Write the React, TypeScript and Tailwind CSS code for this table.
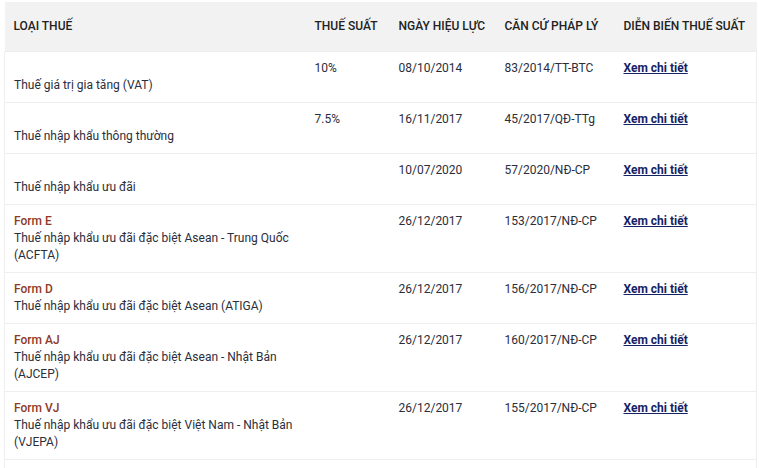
const rows = [
  { form: "", name: "Thuế giá trị gia tăng (VAT)", rate: "10%", date: "08/10/2014", basis: "83/2014/TT-BTC" },
  { form: "", name: "Thuế nhập khẩu thông thường", rate: "7.5%", date: "16/11/2017", basis: "45/2017/QĐ-TTg" },
  { form: "", name: "Thuế nhập khẩu ưu đãi", rate: "", date: "10/07/2020", basis: "57/2020/NĐ-CP" },
  { form: "Form E", name: "Thuế nhập khẩu ưu đãi đặc biệt Asean - Trung Quốc (ACFTA)", rate: "", date: "26/12/2017", basis: "153/2017/NĐ-CP" },
  { form: "Form D", name: "Thuế nhập khẩu ưu đãi đặc biệt Asean (ATIGA)", rate: "", date: "26/12/2017", basis: "156/2017/NĐ-CP" },
  { form: "Form AJ", name: "Thuế nhập khẩu ưu đãi đặc biệt Asean - Nhật Bản (AJCEP)", rate: "", date: "26/12/2017", basis: "160/2017/NĐ-CP" },
  { form: "Form VJ", name: "Thuế nhập khẩu ưu đãi đặc biệt Việt Nam - Nhật Bản (VJEPA)", rate: "", date: "26/12/2017", basis: "155/2017/NĐ-CP" },
];

export default function App() {
  return (
    <div className="bg-white pl-[4px] pt-[2px] pr-[3px] font-['Roboto',sans-serif] text-[12px] leading-[17px] text-[#2a2e3b]">
      <table className="w-[752px] table-fixed border-collapse">
        <colgroup>
          <col className="w-[301px]" />
          <col className="w-[84px]" />
          <col className="w-[106px]" />
          <col className="w-[119px]" />
          <col className="w-[142px]" />
        </colgroup>
        <thead>
          <tr className="h-[49px] bg-[#f2f2f2] text-left uppercase text-[#222]">
            <th className="px-[9px] font-medium">Loại thuế</th>
            <th className="px-[9px] font-medium">Thuế suất</th>
            <th className="px-[9px] font-medium">Ngày hiệu lực</th>
            <th className="px-[9px] font-medium">Căn cứ pháp lý</th>
            <th className="px-[9px] font-medium">Diễn biến thuế suất</th>
          </tr>
        </thead>
        <tbody>
          {rows.map((r, i) => (
            <tr key={i} className="border border-[#eeeeee] align-top">
              <td className="px-[9px] pt-[8px] pb-[8px]">
                <div className="h-[17px] font-medium text-[#8e3a26]">{r.form}</div>
                <div>{r.name}</div>
              </td>
              <td className="px-[9px] pt-[8px] pb-[8px]">{r.rate}</td>
              <td className="px-[9px] pt-[8px] pb-[8px]">{r.date}</td>
              <td className="px-[9px] pt-[8px] pb-[8px]">{r.basis}</td>
              <td className="px-[9px] pt-[8px] pb-[8px]">
                <a href="#" className="font-bold text-[#142266] underline">Xem chi tiết</a>
              </td>
            </tr>
          ))}
          <tr className="h-[20px] border border-[#eeeeee]">
            <td colSpan={5}></td>
          </tr>
        </tbody>
      </table>
    </div>
  );
}
